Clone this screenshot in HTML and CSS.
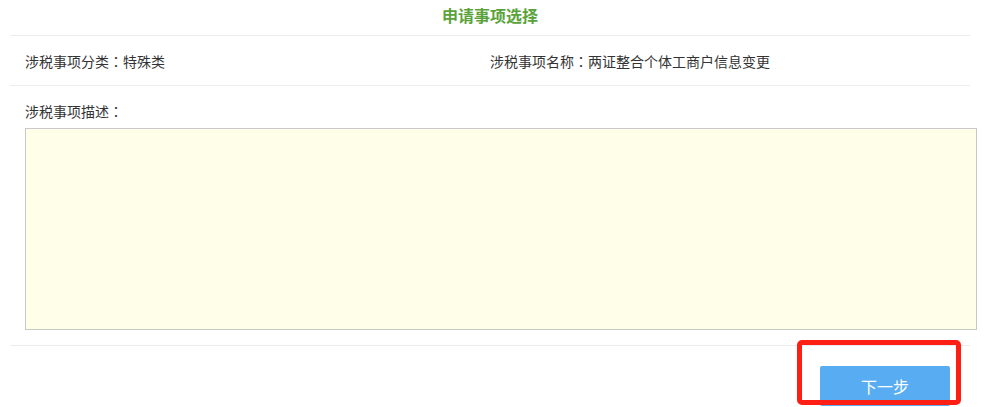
FILE: index.html
```html
<!DOCTYPE html>
<html lang="zh-CN">
<head>
<meta charset="utf-8">
<title>申请事项选择</title>
<link rel="stylesheet" href="styles.css">
</head>
<body>
<div class="page">
  <div class="title">申请事项选择</div>
  <div class="row">
    <div class="cell first">涉税事项分类<span class="colon" lang="zh-TW">：</span>特殊类</div>
    <div class="cell">涉税事项名称<span class="colon" lang="zh-TW">：</span>两证整合个体工商户信息变更</div>
  </div>
  <div class="desc">
    <div class="label">涉税事项描述<span class="colon" lang="zh-TW">：</span></div>
    <div class="area"></div>
  </div>
  <div class="actions">
    <button class="next" type="button">下一步</button>
  </div>
</div>
<div class="highlight"></div>
</body>
</html>
```
FILE: styles.css
```css
html, body {
  margin: 0;
  padding: 0;
  background: #ffffff;
  font-family: "Microsoft YaHei", "Noto Sans CJK SC", "Noto Sans", sans-serif;
  color: #333333;
  overflow: hidden;
}
.page {
  margin-left: 10px;
  width: 960px;
}
.title {
  height: 35px;
  line-height: 30px;
  text-align: center;
  font-size: 16px;
  font-weight: bold;
  color: #5aa23a;
  border-bottom: 1px solid #ececec;
}
.row {
  display: grid;
  grid-template-columns: 480px 480px;
  height: 49px;
  align-items: center;
  border-bottom: 1px solid #ececec;
  font-size: 14px;
}
.cell.first {
  padding-left: 15px;
}
.colon {
  font-family: "Noto Sans CJK TC", "Noto Sans CJK SC", sans-serif;
}
.desc {
  padding: 15px 0 15px 15px;
  border-bottom: 1px solid #ececec;
}
.label {
  font-size: 14px;
  line-height: 20px;
  height: 27px;
}
.area {
  width: 950px;
  height: 200px;
  background: #fffee8;
  border: 1px solid #c9c9c9;
}
.actions {
  display: flex;
  justify-content: flex-end;
  padding: 20px 20px 0 0;
}
.next {
  width: 130px;
  height: 40px;
  border: none;
  border-radius: 2px;
  background: #58adf2;
  color: #ffffff;
  font-family: "Microsoft YaHei", "Noto Sans CJK SC", sans-serif;
  font-size: 16px;
  padding: 0;
}
.highlight {
  position: absolute;
  left: 797px;
  top: 340px;
  width: 154px;
  height: 55px;
  border: 5px solid #ff1e14;
  border-radius: 5px;
}
```
